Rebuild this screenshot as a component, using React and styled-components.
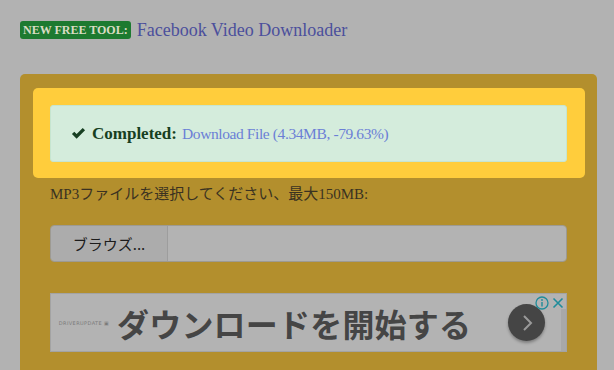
import React from 'react';
import styled, { createGlobalStyle } from 'styled-components';

const GlobalStyle = createGlobalStyle`
  html, body {
    margin: 0;
    padding: 0;
    background: #b2b2b2;
    overflow: hidden;
  }
  body {
    font-family: "Liberation Serif", "Noto Sans CJK JP", serif;
  }
`;

const Page = styled.div`
  width: 614px;
  height: 370px;
  overflow: hidden;
  padding: 0 17px 0 20px;
  box-sizing: border-box;
`;

const Promo = styled.div`
  display: flex;
  align-items: center;
  gap: 6px;
  height: 60px;
`;

const Badge = styled.span`
  background: #1d7a30;
  color: #d9dcc4;
  font-weight: bold;
  font-size: 12px;
  padding: 2px 3px 1px;
  border-radius: 3px;
  line-height: 15px;
`;

const PromoLink = styled.a`
  color: #4b4f9c;
  font-size: 18px;
  text-decoration: none;
`;

const Card = styled.div`
  margin-top: 14px;
  background: #b38f2d;
  border-radius: 5px;
  padding: 14px 12px 20px 13px;
  height: 320px;
  box-sizing: border-box;
`;

const Highlight = styled.div`
  background: #ffcd3c;
  border-radius: 5px;
  padding: 17px 18px 16px 17px;
`;

const Alert = styled.div`
  background: #d4ecdc;
  border: 1px solid #c6e5d0;
  border-radius: 3px;
  height: 55px;
  display: flex;
  align-items: center;
  padding-left: 20px;
`;

const Check = styled.svg`
  width: 15px;
  height: 13px;
  margin-right: 6px;
  flex: none;
`;

const Strong = styled.b`
  color: #173f22;
  font-size: 17px;
  margin-right: 5px;
`;

const AlertLink = styled.a`
  color: #6b7fd6;
  font-size: 15.5px;
  letter-spacing: -0.4px;
  text-decoration: none;
`;

const Body = styled.div`
  padding: 0 18px 0 17px;
`;

const Label = styled.div`
  margin-top: 7px;
  font-size: 15px;
  color: #3a3221;
  line-height: 18px;
`;

const FileInput = styled.div`
  margin-top: 22px;
  height: 37px;
  display: flex;
  border: 1px solid #9d9a92;
  border-radius: 4px;
  overflow: hidden;
  box-sizing: border-box;
`;

const Browse = styled.div`
  width: 116px;
  background: #acacac;
  border-right: 1px solid #9d9d9d;
  display: flex;
  align-items: center;
  justify-content: center;
  font-family: "Noto Sans CJK JP", sans-serif;
  font-size: 15px;
  color: #1c1c1c;
`;

const FileName = styled.div`
  flex: 1;
  background: #b3b3b3;
`;

const Ad = styled.div`
  position: relative;
  margin-top: 31px;
  height: 59px;
  background: #b3b3b3;
  border: 1px solid #a3a3a3;
  display: flex;
  align-items: center;
  box-sizing: border-box;
`;

const Brand = styled.div`
  width: 66px;
  font-family: "DejaVu Sans", sans-serif;
  font-size: 5px;
  letter-spacing: 0.4px;
  color: #7a7a7a;
  text-align: center;
  padding-top: 1px;
`;

const AdText = styled.div`
  flex: 1;
  font-family: "Noto Sans CJK JP", sans-serif;
  font-weight: bold;
  font-size: 32px;
  color: #454545;
  letter-spacing: 0.2px;
`;

const Arrow = styled.div`
  width: 37px;
  height: 37px;
  border-radius: 50%;
  background: #454545;
  box-shadow: 0 2px 3px rgba(0, 0, 0, 0.3);
  display: flex;
  align-items: center;
  justify-content: center;
  margin-right: 16px;
`;

const Strip = styled.div`
  align-self: stretch;
  width: 5px;
  background: #a8a8a8;
  margin-top: 15px;
`;

const AdControls = styled.div`
  position: absolute;
  top: 2px;
  right: 2px;
  display: flex;
  gap: 3px;
  align-items: center;
`;

export default function App() {
  return (
    <Page>
      <GlobalStyle />
      <Promo>
        <Badge>NEW FREE TOOL:</Badge>
        <PromoLink href="#">Facebook Video Downloader</PromoLink>
      </Promo>
      <Card>
        <Highlight>
          <Alert>
            <Check viewBox="0 0 16 13">
              <path d="M1 7 L3.5 4.5 L6 7 L12.5 0.5 L15 3 L6 12 Z" fill="#173f22" />
            </Check>
            <Strong>Completed:</Strong>
            <AlertLink href="#">Download File (4.34MB, -79.63%)</AlertLink>
          </Alert>
        </Highlight>
        <Body>
          <Label>MP3ファイルを選択してください、最大150MB:</Label>
          <FileInput>
            <Browse>ブラウズ...</Browse>
            <FileName />
          </FileInput>
          <Ad>
            <Brand>DRIVERUPDATE ▣</Brand>
            <AdText>ダウンロードを開始する</AdText>
            <Arrow>
              <svg width="14" height="18" viewBox="0 0 14 18">
                <path d="M4 2 L11 9 L4 16" stroke="#9a9a9a" strokeWidth="2" fill="none" />
              </svg>
            </Arrow>
            <Strip />
            <AdControls>
              <svg width="14" height="14" viewBox="0 0 14 14">
                <circle cx="7" cy="7" r="6" stroke="#1f8c9a" strokeWidth="1.3" fill="none" />
                <rect x="6.3" y="6" width="1.4" height="4.5" fill="#1f8c9a" />
                <circle cx="7" cy="4" r="0.9" fill="#1f8c9a" />
              </svg>
              <svg width="12" height="12" viewBox="0 0 12 12">
                <path d="M1.5 1.5 L10.5 10.5 M10.5 1.5 L1.5 10.5" stroke="#1f8c9a" strokeWidth="1.6" />
              </svg>
            </AdControls>
          </Ad>
        </Body>
      </Card>
    </Page>
  );
}
